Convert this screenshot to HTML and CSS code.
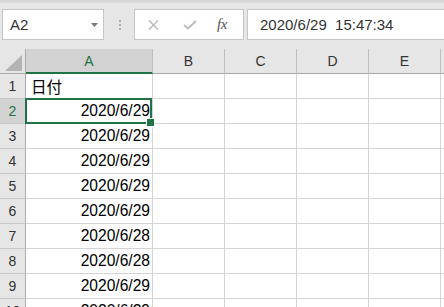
FILE: index.html
```html
<!DOCTYPE html>
<html lang="ja">
<head>
<meta charset="utf-8">
<link rel="stylesheet" href="styles.css">
</head>
<body>
<div class="topband"></div>
<div class="toolbar">
  <div class="namebox"><span>A2</span><svg class="arrow" width="7" height="4" viewBox="0 0 7 4"><polygon points="0,0 7,0 3.5,4" fill="#7a7a7a"/></svg></div>
  <div class="grip"><i></i><i></i><i></i></div>
  <div class="fbuttons">
    <svg class="ic-x" width="11" height="10" viewBox="0 0 11 10"><path d="M1 0.5 L10 9.5 M10 0.5 L1 9.5" stroke="#bdbdbd" stroke-width="1.6" fill="none"/></svg>
    <svg class="ic-ok" width="14" height="10" viewBox="0 0 14 10"><path d="M1 5 L5 8.5 L13 1" stroke="#bdbdbd" stroke-width="2" fill="none"/></svg>
    <span class="fx">fx</span>
  </div>
  <div class="formula">2020/6/29  15:47:34</div>
</div>
<div class="grid">
  <div class="corner"><svg width="17" height="16" viewBox="0 0 17 16"><polygon points="17,0 17,16 0,16" fill="#b4b4b4"/></svg></div>
  <div class="ch sel">A</div><div class="ch">B</div><div class="ch">C</div><div class="ch">D</div><div class="ch">E</div><div class="ch last"></div>

  <div class="rh">1</div><div class="c">日付</div><div class="c"></div><div class="c"></div><div class="c"></div><div class="c"></div><div class="c"></div>
  <div class="rh sel">2</div><div class="c num active">2020/6/29</div><div class="c"></div><div class="c"></div><div class="c"></div><div class="c"></div><div class="c"></div>
  <div class="rh">3</div><div class="c num">2020/6/29</div><div class="c"></div><div class="c"></div><div class="c"></div><div class="c"></div><div class="c"></div>
  <div class="rh">4</div><div class="c num">2020/6/29</div><div class="c"></div><div class="c"></div><div class="c"></div><div class="c"></div><div class="c"></div>
  <div class="rh">5</div><div class="c num">2020/6/29</div><div class="c"></div><div class="c"></div><div class="c"></div><div class="c"></div><div class="c"></div>
  <div class="rh">6</div><div class="c num">2020/6/29</div><div class="c"></div><div class="c"></div><div class="c"></div><div class="c"></div><div class="c"></div>
  <div class="rh">7</div><div class="c num">2020/6/28</div><div class="c"></div><div class="c"></div><div class="c"></div><div class="c"></div><div class="c"></div>
  <div class="rh">8</div><div class="c num">2020/6/28</div><div class="c"></div><div class="c"></div><div class="c"></div><div class="c"></div><div class="c"></div>
  <div class="rh">9</div><div class="c num">2020/6/29</div><div class="c"></div><div class="c"></div><div class="c"></div><div class="c"></div><div class="c"></div>
  <div class="rh">10</div><div class="c num">2020/6/29</div><div class="c"></div><div class="c"></div><div class="c"></div><div class="c"></div><div class="c"></div>
</div>
</body>
</html>
```
FILE: styles.css
```css
* { box-sizing: border-box; margin: 0; padding: 0; }
html, body { width: 444px; height: 307px; overflow: hidden; }
body {
  background: #e6e6e6;
  font-family: "Liberation Sans", "Noto Sans CJK JP", sans-serif;
}
.topband { height: 3px; background: linear-gradient(#d2d2d2, #dedede); }
.toolbar {
  display: flex;
  align-items: center;
  height: 46px;
  padding: 6px 0 9px 2px;
}
.namebox {
  width: 102px;
  height: 31px;
  flex: none;
  background: #fff;
  border: 1px solid #c6c6c6;
  display: flex;
  align-items: center;
  justify-content: space-between;
  padding: 0 5px 0 7px;
  font-size: 15px;
  color: #333;
}
.arrow { margin-top: 1px; }
.grip {
  width: 2px;
  flex: none;
  margin: 0 13px 0 15px;
  display: flex;
  flex-direction: column;
  gap: 2px;
}
.grip i { display: block; width: 2px; height: 2px; background: #b0b0b0; }
.fbuttons {
  width: 110px;
  height: 31px;
  flex: none;
  background: #fff;
  border: 1px solid #c6c6c6;
  display: flex;
  align-items: center;
  padding-left: 13px;
}
.ic-ok { margin-left: 24px; }
.fx {
  margin-left: 20px;
  font-family: "Liberation Serif", serif;
  font-style: italic;
  font-size: 15px;
  color: #555;
  letter-spacing: -0.5px;
}
.formula {
  flex: 1;
  height: 31px;
  margin-left: 3px;
  margin-right: -2px;
  background: #fff;
  border: 1px solid #c6c6c6;
  display: flex;
  align-items: center;
  padding-left: 12px;
  font-size: 15px;
  color: #333;
  white-space: pre;
}
.grid {
  display: grid;
  grid-template-columns: 26px 127px 72px 72px 72px 72px 1fr;
  grid-auto-rows: 25px;
}
.c {
  background: #fff;
  border-right: 1px solid #d4d4d4;
  border-bottom: 1px solid #d4d4d4;
  display: flex;
  align-items: center;
  padding: 0 2px 0 5px;
  font-size: 15.6px;
  color: #000;
  white-space: nowrap;
  overflow: visible;
}
.num { justify-content: flex-end; }
.corner {
  background: #e6e6e6;
  border-right: 1px solid #ababab;
  border-bottom: 1px solid #ababab;
  display: flex;
  align-items: flex-end;
  justify-content: flex-end;
  padding: 0 3px 2px 0;
}
.ch {
  background: #e6e6e6;
  border-right: 1px solid #c0c0c0;
  border-bottom: 1px solid #ababab;
  display: flex;
  align-items: center;
  justify-content: center;
  font-size: 14px;
  color: #333;
}
.ch.sel {
  background: #d2d2d2;
  color: #217346;
  border-bottom: 2px solid #217346;
}
.ch.last { border-right: none; }
.rh {
  background: #e6e6e6;
  border-right: 1px solid #ababab;
  border-bottom: 1px solid #c8c8c8;
  display: flex;
  align-items: center;
  justify-content: center;
  font-size: 14px;
  color: #333;
}
.rh.sel { background: #d2d2d2; color: #217346; }
.active { position: relative; }
.active::after {
  content: "";
  position: absolute;
  left: -1px;
  top: -1px;
  right: 0;
  bottom: -1px;
  border: 2px solid #217346;
  z-index: 1;
}
.active::before {
  content: "";
  position: absolute;
  right: -3px;
  bottom: -4px;
  width: 7px;
  height: 7px;
  background: #217346;
  border: 1px solid #fff;
  z-index: 2;
}
```
